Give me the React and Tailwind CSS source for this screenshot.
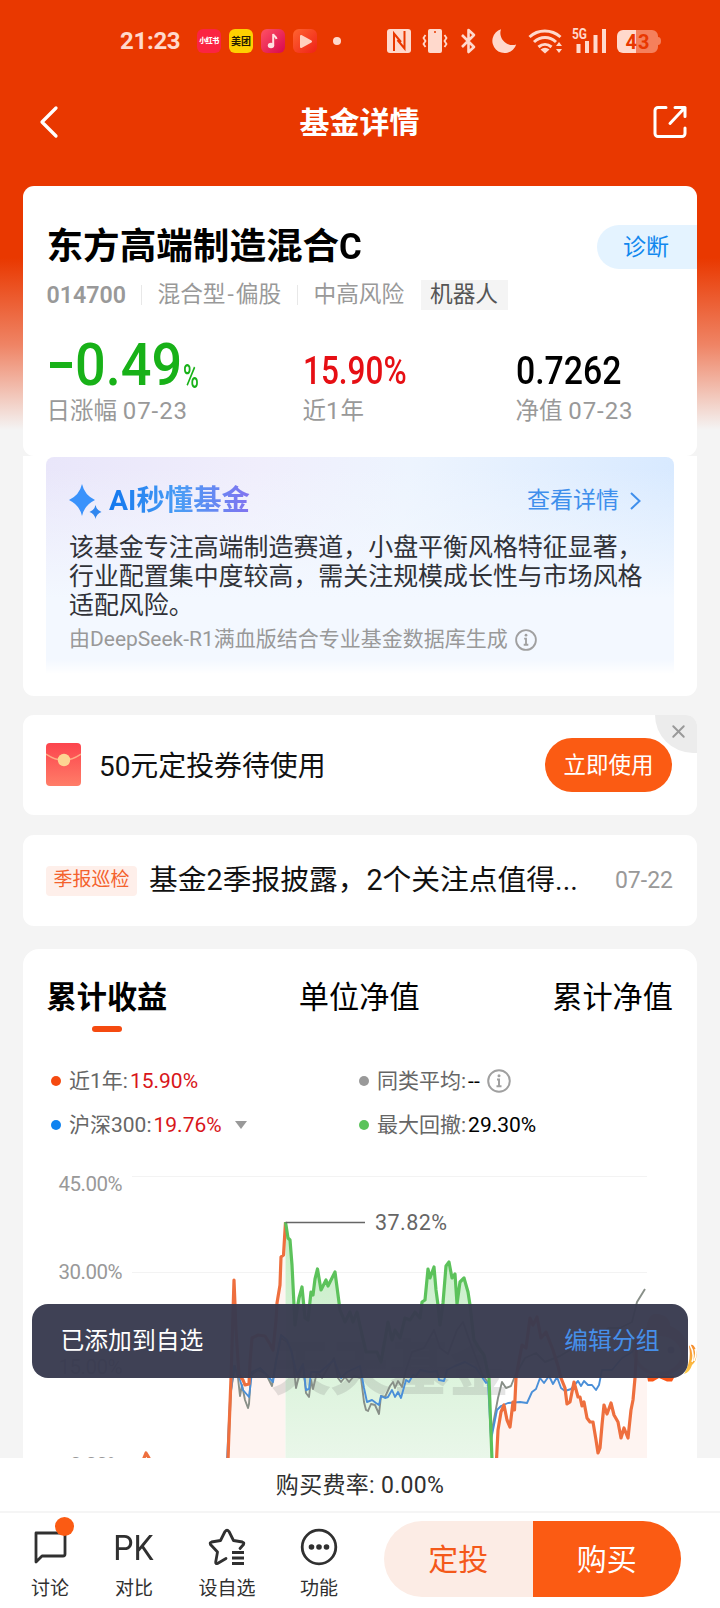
import { ChevronLeft, X } from "lucide-react";

const ORANGE_START = "138,1466 142,1463 146,1453 149,1458 152,1466";
const ORANGE_RISE =
  "228,1460 229,1430 231,1378 234,1280 236,1330 239,1375 243,1380 245,1385 249,1384 250,1362 252,1338 258,1335 265,1336 270,1344 273,1350 276,1320 277,1303 280,1285 281,1257 283.5,1255 285.5,1222";
const ORANGE_FALL =
  "496.5,1460 498,1430 501,1412 504,1405 507,1420 510,1427 513,1402 514.5,1410 516,1378 518,1366 522,1345 526,1348 530,1318 533,1325 537,1317 541,1338 546,1332 553,1350 558,1366 561,1378 565,1388 567,1404 570,1402 574,1382 578,1397 580,1397 582,1406 584,1402 587,1418 590,1422 593,1422 596,1440 598,1453 600,1448 602,1425 604,1405 607,1414 611,1403 614,1415 618,1422 621,1438 624,1428 628,1438 631,1410 633,1400 635,1378 637,1340";
const GREEN =
  "285.5,1222 288,1238 290,1240 292,1265 295,1325 297,1310 299,1298 302,1287 305,1318 308,1320 311,1292 313,1295 315,1279 317.5,1269 321,1290 326,1280 328,1286 335,1272 340,1310 345,1322 350,1312 353,1322 357,1312 361,1330 366,1352 377,1352 381,1362 388,1322 392,1340 395,1330 400,1338 405,1318 410,1320 415,1312 420,1318 422,1302 425,1300 428,1269 430,1278 434,1267 436,1290 438,1305 440,1325 443,1303 446,1266 449,1262 452,1278 455,1274 457,1304 460,1282 464,1278 468,1292 470,1305 474,1340 480,1350 484,1355 489,1378 492,1460";
const BLUE =
  "227,1460 230,1400 234,1366 240,1380 243,1390 249,1397 252,1372 260,1368 266,1374 273,1382 276,1362 281,1335 287,1340 291,1350 297,1375 303,1364 306,1390 309,1389 311,1372 320,1372 334,1360 341,1378 347,1372 360,1366 364,1388 367,1402 372,1400 376,1403 379,1405 381,1396 385,1398 388,1397 392,1390 395,1397 398,1392 401,1398 406,1380 409,1382 413,1375 416,1376 420,1370 430,1372 437,1371 439,1380 444,1381 447,1370 455,1366 465,1362 476,1368 482,1377 486,1383 488,1382 491,1440 497,1410 501,1406 508,1403 520,1402 527,1403 532,1392 536,1389 540,1378 544,1383 549,1376 553,1384 557,1377 561,1388 565,1391 571,1389 578,1381 581,1386 584,1381 588,1385 592,1385 596,1390 599,1385 602,1370 612,1370 622,1358 632,1352 637,1346";
const GRAY =
  "228,1460 231,1390 235,1366 238,1378 240,1396 242,1385 245,1400 248,1408 249,1404 251,1375 258,1370 266,1374 272,1386 276,1360 281,1338 287,1342 292,1352 296,1388 299,1376 303,1364 306,1393 309,1397 311,1380 313,1389 317,1372 322,1378 334,1358 338,1378 341,1382 345,1377 349,1382 354,1376 361,1378 364,1402 366,1410 368,1411 371,1404 375,1405 379,1414 381,1396 385,1397 390,1386 393,1382 395,1388 398,1381 402,1387 406,1370 412,1352 424,1348 434,1330 440,1348 448,1354 457,1330 463,1322 470,1342 482,1374 489,1384 491,1435 498,1398 502,1382 506,1388 511,1386 515,1376 525,1358 536,1353 545,1362 560,1356 570,1350 580,1336 595,1345 608,1328 620,1328 632,1322 637,1302 645,1289";

function StatusBar() {
  return (
    <div className="flex h-[82px] items-center pl-[120px] text-[#ffd9cc]">
      <span className="w-[77px] text-[24px] font-bold leading-none tracking-[-0.3px]">21:23</span>
      <div className="flex items-center gap-2">
        <span className="flex h-6 w-6 items-center justify-center rounded-[6px] bg-[#fb2442] text-[7px] font-black tracking-[-0.5px] text-white">
          小红书
        </span>
        <span className="flex h-6 w-6 items-center justify-center rounded-[6px] bg-[#ffd000] text-[10px] font-bold text-[#241a00]">
          美团
        </span>
        <svg className="h-6 w-6" viewBox="0 0 24 24">
          <defs>
            <linearGradient id="music" x1="0" y1="0" x2="1" y2="1">
              <stop offset="0" stopColor="#ff5263" />
              <stop offset="1" stopColor="#d8074f" />
            </linearGradient>
          </defs>
          <rect width="24" height="24" rx="6" fill="url(#music)" />
          <ellipse cx="10" cy="16.5" rx="3.2" ry="2.8" fill="#ffe0e0" />
          <path d="M12.2 16.5V5c.6 2.500 2.800 2.300 3.300 5" fill="none" stroke="#ffe0e0" strokeWidth="2" />
        </svg>
        <svg className="h-6 w-6" viewBox="0 0 24 24">
          <defs>
            <linearGradient id="video" x1="0" y1="0" x2="1" y2="1">
              <stop offset="0" stopColor="#ff6430" />
              <stop offset="1" stopColor="#ee2118" />
            </linearGradient>
          </defs>
          <rect width="24" height="24" rx="6" fill="url(#video)" />
          <path d="M8 7v11l10-5.500z" fill="#ffd0c0" stroke="#ffd0c0" strokeWidth="2" strokeLinejoin="round" />
        </svg>
      </div>
      <span className="ml-4 h-[8px] w-[8px] rounded-full bg-[#ffd9cc]" />

      <svg className="ml-[46px] h-7 w-[276px]" viewBox="0 0 276 28" fill="none" stroke="#ffd9cc">
        {/* nfc */}
        <rect x="0" y="2" width="24" height="24" rx="3" fill="#ffd9cc" stroke="none" />
        <path d="M7 24V6.500l7 8.500M17.500 4v17.500l-7-8.500" stroke="#e93800" strokeWidth="2" />
        {/* vibrate */}
        <rect x="41" y="2" width="14" height="24" rx="2" fill="#ffd9cc" stroke="none" />
        <circle cx="48" cy="5" r="1" fill="#e93800" stroke="none" />
        <path d="M38.500 8l-2 3 2 3-2 3 2 3M57.500 8l2 3-2 3 2 3-2 3" strokeWidth="1.800" />
        {/* bluetooth */}
        <path d="M75 8l12 12-5.500 5V3L87 8 75 20" strokeWidth="2.600" strokeLinejoin="round" />
        {/* moon */}
        <path d="M114 2.200a12.200 12.200 0 1 0 15.200 15.300c-9 3-18.500-6-15.200-15.300z" fill="#ffd9cc" stroke="none" />
        {/* wifi */}
        <path d="M142.500 10c8.500-8 22-8 31 0M147 15c6.500-6 15.500-6 22 0M151.500 20c4-3.500 9-3.500 13 0" strokeWidth="3" />
        <path d="M153.500 22.500q4.500-3.500 9 0l-4.500 4z" fill="#ffd9cc" stroke="none" />
        <path d="M169 19l3-4 3 4zM169 22l3 4 3-4z" fill="#ffd9cc" stroke="none" />
        {/* signal */}
        <path d="M191.500 26v-9M200 26v-12M208.500 26V8M217 26V2" strokeWidth="4" />
        <text x="185" y="12" fontSize="14" fontWeight="700" textLength="15" lengthAdjust="spacingAndGlyphs" fill="#ffd9cc" stroke="none">
          5G
        </text>
        {/* battery */}
        <path d="M249 3h16a6 6 0 0 1 6 6v1q3 0 3 4t-3 4v2a6 6 0 0 1-6 6h-16z" fill="#f5805c" stroke="none" />
        <path d="M249 3h-13a6 6 0 0 0-6 6v11a6 6 0 0 0 6 6h13z" fill="#ffd9cc" stroke="none" />
        <text x="238.500" y="21.500" fontSize="20" fontWeight="700" textLength="24" fill="#e93800" stroke="none">
          43
        </text>
      </svg>
    </div>
  );
}

function NavBar() {
  return (
    <div className="flex h-[104px] items-start justify-between pl-[31px] pr-[32px] pt-[16px]">
      <div className="flex h-12 w-10 items-center">
        <ChevronLeft className="-ml-[10px] h-14 w-14 shrink-0 text-white" strokeWidth={1.4} />
      </div>
      <h1 className="-ml-[4px] text-[30px] font-bold leading-[50px] text-white">基金详情</h1>
      <div className="flex h-12 w-9 items-center">
        <svg className="h-9 w-9" viewBox="0 0 36 36" fill="none" stroke="#fff" strokeWidth="3" strokeLinecap="round" strokeLinejoin="round">
          <path d="M14 3.500H6a3 3 0 0 0-3 3v23a3 3 0 0 0 3 3h24a3 3 0 0 0 3-3V24" />
          <path d="M23 3.500h10v9M33 3.500 18 19.500" />
        </svg>
      </div>
    </div>
  );
}

function InfoIcon({ size }) {
  return (
    <svg width={size} height={size} viewBox="0 0 24 24" fill="none" stroke="#a0a0a0" strokeWidth="2">
      <circle cx="12" cy="12" r="10.800" />
      <path d="M10 10.500H12V17M9.500 17.200h5" />
      <circle cx="12" cy="6.800" r="1.500" fill="#a0a0a0" stroke="none" />
    </svg>
  );
}

function FundCard() {
  return (
    <div className="h-[270px] rounded-[11px] bg-white pl-[23.5px] pt-[34px]">
      <div className="flex h-[54px] items-center justify-between">
        <h2 className="text-[36.6px] font-bold leading-[56px] text-black">
          东方高端制造混合<span className="inline-block origin-left scale-x-95">C</span>
        </h2>
        <span className="flex h-[44px] w-[100px] items-center rounded-l-full bg-[#e4f3ff] pl-[26px] pt-[2px] text-[23px] text-[#1187ee]">
          诊断
        </span>
      </div>

      <div className="mt-1.5 flex h-[30px] items-center text-[22.7px] text-[#999]">
        <span className="w-[94px] text-[23.2px] font-semibold">014700</span>
        <span className="h-5 w-px bg-[#e8e8e8]" />
        <span className="ml-4 w-[139px] whitespace-nowrap">
          混合型<span className="mx-[2px]">-</span>偏股
        </span>
        <span className="h-5 w-px bg-[#e8e8e8]" />
        <span className="ml-4 w-[107px]">中高风险</span>
        <span className="flex h-[30px] w-[87px] items-center justify-center bg-[#f4f4f4] text-[#555]">
          机器人
        </span>
      </div>

      <div className="mt-[21px] flex">
        <div className="w-[256px]">
          <div className="flex h-[64px] items-end text-[#18b118]">
            <span className="mb-[27px] ml-[3px] h-[6px] w-[22px] bg-[#18b118]" />
            <span className="ml-[3px] w-[108px] origin-left text-[60px] font-medium leading-[60px]">
              <span className="inline-block origin-left scale-x-[0.9]">0.49</span>
            </span>
            <span className="mb-[-2px] inline-block origin-left scale-x-[0.65] text-[33px] font-medium leading-[40px]">%</span>
          </div>
          <p className="mt-px text-[23.5px] leading-[30px] text-[#999]">
            日涨幅 <span className="tracking-[0.9px] text-[24px]">07-23</span>
          </p>
        </div>
        <div className="w-[213px]">
          <div className="flex h-[64px] items-end text-[#e60f14]">
            <span className="inline-block origin-left scale-x-[0.83] text-[38px] font-medium leading-[48px]">15.90%</span>
          </div>
          <p className="mt-px text-[23.5px] leading-[30px] text-[#999]">
            近<span className="tracking-[0.9px] text-[24px]">1</span>年
          </p>
        </div>
        <div>
          <div className="flex h-[64px] items-end text-black">
            <span className="inline-block origin-left scale-x-[0.89] text-[38px] font-medium leading-[48px]">0.7262</span>
          </div>
          <p className="mt-px text-[23.5px] leading-[30px] text-[#999]">
            净值 <span className="tracking-[0.9px] text-[24px]">07-23</span>
          </p>
        </div>
      </div>
    </div>
  );
}

function AiPanel() {
  return (
    <div className="h-[240px] rounded-b-[11px] bg-white px-[23px] pt-px">
      <div className="h-[217px] rounded-t-[8px] bg-[linear-gradient(to_bottom,transparent_93%,#fff_100%),linear-gradient(to_bottom,transparent_5%,#f3f8ff_65%),linear-gradient(100deg,#e9e6fa_0%,#f0eefc_32%,#edf4fe_55%,#d5e8ff_100%)] px-[23px] pt-[24px]">
        <div className="flex h-10 items-center">
          <svg className="h-9 w-9" viewBox="0 0 36 36">
            <path d="M13 1q2.500 11 13 16Q15.500 22 13 33 10.500 22 0 17 10.500 12 13 1z" fill="#3a92fb" />
            <path d="M26.500 24.500q1.200 5.500 6 7-4.800 1.500-6 7-1.200-5.500-6-7 4.800-1.500 6-7z" fill="#3187ef" transform="translate(0 -2.500)" />
          </svg>
          <h3 className="ml-[4px] bg-[linear-gradient(90deg,#1277ee_0%,#4a9df5_50%,#8273f0_100%)] bg-clip-text text-[28.4px] font-bold leading-[42px] text-transparent">
            AI秒懂基金
          </h3>
          <span className="ml-auto text-[23px] text-[#3f8fec]">查看详情</span>
          <svg className="ml-[11px] mr-[10px] h-[18px] w-[11px]" viewBox="0 0 11 18" fill="none" stroke="#3f8fec" strokeWidth="2">
            <path d="M1 1l8.500 8L1 17" />
          </svg>
        </div>
        <p className="-mr-4 mt-[12px] whitespace-nowrap text-[24.95px] leading-[29.2px] text-[#303238]">
          该基金专注高端制造赛道，小盘平衡风格特征显著，
          <br />
          行业配置集中度较高，需关注规模成长性与市场风格
          <br />
          适配风险。
        </p>
        <div className="mt-[4px] flex h-[30px] items-center gap-[7px] text-[21px] text-[#999]">
          <span>由DeepSeek-R1满血版结合专业基金数据库生成</span>
          <InfoIcon size={22} />
        </div>
      </div>
    </div>
  );
}

function CouponCard() {
  return (
    <div className="relative mt-[19px] flex h-[100px] items-center overflow-hidden rounded-[11px] bg-white pl-[23px] pr-[25px]">
      <svg className="-mt-[2px] h-[43px] w-[35px]" viewBox="0 0 35 43">
        <defs>
          <linearGradient id="packet" x1="0" y1="0" x2="0" y2="1">
            <stop offset="0" stopColor="#fc444d" />
            <stop offset="1" stopColor="#ff7d68" />
          </linearGradient>
        </defs>
        <rect width="35" height="43" rx="4" fill="url(#packet)" />
        <path d="M0 11q17.500 12 35 0" fill="none" stroke="#ffab85" strokeWidth="1.500" />
        <circle cx="18" cy="17" r="6.200" fill="#fdd592" />
      </svg>
      <span className="ml-[18px] pt-[4px] text-[27.9px] text-[#111]">50元定投券待使用</span>
      <button className="ml-auto h-[54px] w-[127px] rounded-full bg-[#fb5b13] pt-px text-[22.5px] text-white">
        立即使用
      </button>
      <span className="absolute right-0 top-0 flex h-[38px] w-[42px] items-center justify-center rounded-bl-[38px] bg-[#ececec]">
        <X className="-mt-1.5 ml-1 h-[21px] w-[21px] text-[#999]" strokeWidth={2.2} />
      </span>
    </div>
  );
}

function ReportCard() {
  return (
    <div className="mt-[20px] flex h-[91px] items-center rounded-[11px] bg-white pl-[23px] pr-[24px]">
      <span className="flex h-[30px] w-[91px] items-center justify-center rounded-[4px] bg-[#feefea] text-[19px] text-[#f4622d]">
        季报巡检
      </span>
      <span className="ml-[12px] whitespace-nowrap text-[28.75px] text-[#111]">
        基金2季报披露，2个关注点值得...
      </span>
      <span className="ml-auto pt-px text-[23px] text-[#999]">07-22</span>
    </div>
  );
}

function LegendItem({ dot, label, value, valueColor, children }) {
  return (
    <div className="flex h-[44px] items-center text-[21px]">
      <span className={`mr-[8px] h-[10px] w-[10px] rounded-full ${dot}`} />
      <span className="pt-px text-[#666]">{label}:</span>
      <span className={`ml-[2px] pt-px ${valueColor}`}>{value}</span>
      {children}
    </div>
  );
}

function Chart() {
  return (
    <svg className="block h-[308px] w-[674px]" viewBox="23 1150 674 308">
      <defs>
        <linearGradient id="greenFill" x1="0" y1="0" x2="0" y2="1">
          <stop offset="0" stopColor="#c4edc4" />
          <stop offset="1" stopColor="#eaf7ea" />
        </linearGradient>
        <linearGradient id="tail" x1="0" y1="0" x2="0" y2="1">
          <stop offset="0" stopColor="#f58a2c" />
          <stop offset="1" stopColor="#ffcf4a" />
        </linearGradient>
      </defs>

      <path d="M132 1176.500h515M132 1272.500h515M132 1369h515" stroke="#f3f3f3" strokeWidth="1" />
      <g fontSize="20.500" fill="#999">
        <text x="58.500" y="1191" textLength="64">45.00%</text>
        <text x="58.500" y="1278.500" textLength="64">30.00%</text>
        <text x="58.500" y="1374" textLength="64">15.00%</text>
        <text x="70" y="1471.500" textLength="52">0.00%</text>
      </g>

      <polygon points={`${ORANGE_RISE} 285.5,1460`} fill="#fef4f1" />
      <polygon points={`${GREEN} 285.5,1460`} fill="url(#greenFill)" />
      <polygon points={`${ORANGE_FALL} 647,1340 647,1460`} fill="#fef4f1" />

      <text x="271" y="1390" fontSize="60" fontWeight="900" fill="#7a7a7a" fillOpacity="0.2" textLength="238">
        天天基金
      </text>

      <g fill="none" strokeLinejoin="round">
        <polyline points={GRAY} stroke="#888f88" strokeWidth="1.900" />
        <polyline points={BLUE} stroke="#4a8fd8" strokeWidth="1.900" />
        <polyline points={ORANGE_START} stroke="#ee6f3e" strokeWidth="3.200" />
        <polyline points={ORANGE_RISE} stroke="#ee6f3e" strokeWidth="3.200" />
        <polyline points={ORANGE_FALL} stroke="#ee6f3e" strokeWidth="3.200" />
        <polyline points={GREEN} stroke="#5cc25b" strokeWidth="3.200" />
      </g>

      <path d="M285.500 1222.500H365" stroke="#666" strokeWidth="1.700" />
      <text x="375" y="1229.500" fontSize="21.500" fill="#666" textLength="72">
        37.82%
      </text>

      {/* mascot, mostly covered by the toast */}
      <g>
        <g opacity="0.45">
          <ellipse cx="660" cy="1350" rx="28" ry="26" fill="#f3703a" />
          <path d="M646 1330q2-18 12-16 14 2 12 16z" fill="#e8472c" />
          <ellipse cx="659" cy="1354" rx="22" ry="18" fill="#ffd7a8" />
          <circle cx="647" cy="1350" r="3.500" fill="#1d2740" />
          <circle cx="671" cy="1350" r="3.500" fill="#1d2740" />
        </g>
        <path d="M647 1376l1 5.500h5l6-3.500 8 3.500h5l3-5.500z" fill="#fa5617" />
        <path d="M684 1374q8-14 5-28 4-4 7 4 2 10-4 15-2 7-8 9z" fill="url(#tail)" />
        <path d="M690 1345q5 8 2 17M695 1349q2 5-1 12" fill="none" stroke="#fff" strokeWidth="1.500" />
      </g>
    </svg>
  );
}

function ChartCard() {
  return (
    <div className="mt-[23px] h-[520px] rounded-t-[16px] bg-white">
      <div className="flex items-start justify-between pl-[23.5px] pr-6 pt-[28px] text-[30.2px] leading-[42px] text-black">
        <div className="flex flex-col items-center font-bold">
          累计收益
          <span className="mt-[7px] h-[6px] w-[30px] rounded-full bg-[#f54a10]" />
        </div>
        <span className="-ml-px">单位净值</span>
        <span>累计净值</span>
      </div>

      <div className="mt-[27px] grid h-[91px] grid-cols-[308px_1fr] content-start pl-[28px]">
        <LegendItem dot="bg-[#f54a10]" label="近1年" value="15.90%" valueColor="text-[#d8151a]" />
        <LegendItem dot="bg-[#999]" label="同类平均" value="--" valueColor="text-black">
          <span className="ml-[7px]">
            <InfoIcon size={24} />
          </span>
        </LegendItem>
        <LegendItem dot="bg-[#0f83f0]" label="沪深300" value="19.76%" valueColor="text-[#d8151a]">
          <svg className="ml-[13px] h-[8px] w-[12px]" viewBox="0 0 12 8">
            <path d="M0 0h12L6 8z" fill="#999" />
          </svg>
        </LegendItem>
        <LegendItem dot="bg-[#5ac35a]" label="最大回撤" value="29.30%" valueColor="text-black" />
      </div>

      <Chart />
    </div>
  );
}

function Toast() {
  return (
    <div className="absolute left-8 top-[1304px] flex h-[74px] w-[656px] items-center justify-between rounded-[16px] bg-[#393b50]/97 px-[28.5px] pt-[2px] text-[23.8px]">
      <span className="text-white">已添加到自选</span>
      <span className="text-[#468fe9]">编辑分组</span>
    </div>
  );
}

function TabItem({ label, width, children }) {
  return (
    <div className={`flex flex-col items-center ${width}`}>
      <div className="relative flex h-[40px] items-center justify-center">{children}</div>
      <span className="mt-[9px] text-[19px] leading-[26px] text-[#303030]">{label}</span>
    </div>
  );
}

function BottomBar() {
  return (
    <div className="h-[150px] bg-white">
      <div className="h-[55px] border-b-2 border-[#f5f5f5] text-center text-[23px] leading-[55px] tracking-[0.3px] text-[#303030]">
        购买费率: 0.00%
      </div>
      <div className="flex h-[95px] pl-[8px] pt-[14px]">
        <TabItem label="讨论" width="w-[84px]">
          <svg className="h-[36px] w-[36px]" viewBox="0 0 36 36" fill="none" stroke="#303030" strokeWidth="2.800" strokeLinejoin="round">
            <path d="M4 4h27a2 2 0 0 1 2 2v19a2 2 0 0 1-2 2H10l-6 6z" />
          </svg>
          <span className="absolute -top-[10px] left-[23px] h-[19px] w-[19px] rounded-full bg-[#fb5b13]" />
        </TabItem>
        <TabItem label="对比" width="w-[84px]">
          <span className="-ml-px mt-[1px] scale-x-[0.9] text-[35.5px] leading-[40px] text-[#303030]">PK</span>
        </TabItem>
        <TabItem label="设自选" width="w-[102px]">
          <svg className="h-[38px] w-[38px]" viewBox="0 0 38 38" fill="none" stroke="#303030" strokeWidth="2.800" strokeLinecap="round" strokeLinejoin="round">
            <path d="M18 30.500 9.500 35.500q-2 .8-1.800-1.500L9.500 24 2.500 16.500q-1-2 1-2.500l9-1.500L17 3.500q2-2.500 4 0l4.500 9 9 1.500q2 .5 1 2.500L32 20.500" />
            <path d="M24 24.500h12M24 30h12M24 35.500h12" strokeLinecap="butt" />
          </svg>
        </TabItem>
        <TabItem label="功能" width="w-[82px]">
          <svg className="h-[38px] w-[38px]" viewBox="0 0 38 38" fill="none" stroke="#303030" strokeWidth="2.800">
            <circle cx="19" cy="19" r="16.800" />
            <g fill="#303030" stroke="none">
              <circle cx="11.500" cy="19" r="2.800" />
              <circle cx="19" cy="19" r="2.800" />
              <circle cx="26.500" cy="19" r="2.800" />
            </g>
          </svg>
        </TabItem>
        <div className="-mt-[6px] ml-[24px] flex h-[76px] w-[297px] overflow-hidden rounded-full text-[30px]">
          <button className="flex-1 bg-[#fcece5] text-[#f4591a]">定投</button>
          <button className="flex-1 bg-[#fb5b13] text-white">购买</button>
        </div>
      </div>
    </div>
  );
}

export default function App() {
  return (
    <div className="relative h-[1608px] w-[720px] overflow-hidden bg-[#f4f4f4] bg-[linear-gradient(to_bottom,#e93800_0px,#e93800_258px,#ef8465_345px,#f4f4f4_430px)] font-['Roboto','Noto_Sans_CJK_SC',sans-serif]">
      <div className="h-[1458px] overflow-hidden">
        <StatusBar />
        <NavBar />
        <div className="px-[23px]">
          <FundCard />
          <AiPanel />
          <CouponCard />
          <ReportCard />
          <ChartCard />
        </div>
      </div>
      <BottomBar />
      <Toast />
    </div>
  );
}
